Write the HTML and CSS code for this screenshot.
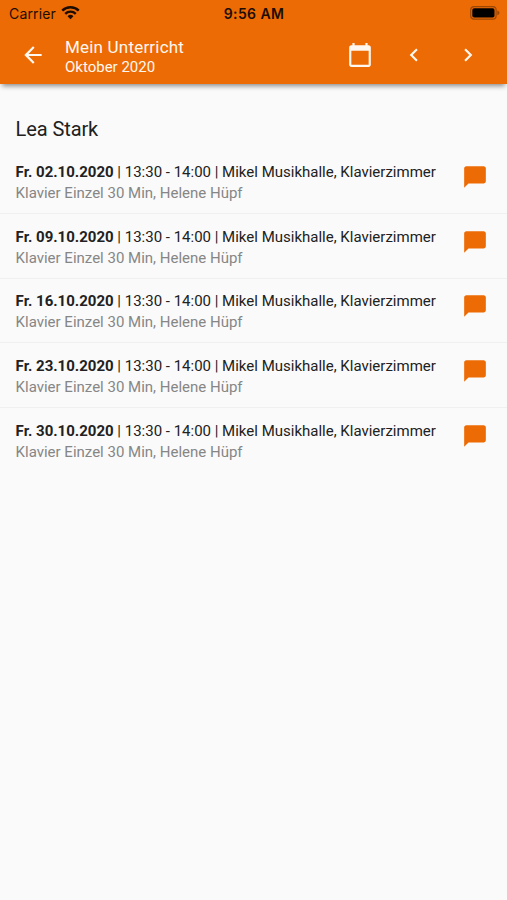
FILE: index.html
```html
<!DOCTYPE html>
<html lang="de">
  <head>
    <meta charset="UTF-8" />
    <meta name="viewport" content="width=device-width, initial-scale=1.0" />
    <title>Mein Unterricht</title>
    <link rel="stylesheet" href="styles.css">
  </head>
  <body>
    <header class="header">
      <div class="statusbar">
        <div class="carrier">
          <span>Carrier</span>
          <svg class="wifi" viewBox="0 0 18 14">
            <path d="M1.2 5.2a11.2 11.2 0 0 1 15.6 0" />
            <path d="M4 8.2a7.2 7.2 0 0 1 10 0" />
            <path class="dot" d="M9 13.4 6.2 10.6a4 4 0 0 1 5.6 0z" />
          </svg>
        </div>
        <div class="time">9:56 AM</div>
        <svg class="battery" viewBox="0 0 30 14">
          <rect class="case" x="0.7" y="0.7" width="25.4" height="12.4" rx="3.4" />
          <rect x="2.3" y="2.3" width="22.2" height="9.2" rx="1.8" />
          <path class="cap" d="M27.3 4.6c1.4.5 2.1 1.3 2.1 2.3s-.7 1.8-2.1 2.3z" />
        </svg>
      </div>

      <div class="toolbar">
        <svg class="icon back" viewBox="0 0 24 24">
          <path d="M20 11H7.83l5.59-5.59L12 4l-8 8 8 8 1.41-1.41L7.83 13H20v-2z" />
        </svg>
        <div class="titles">
          <div class="title">Mein Unterricht</div>
          <div class="month">Oktober 2020</div>
        </div>
        <div class="actions">
          <svg class="icon" viewBox="0 0 24 24">
            <path d="M20 3h-1V1h-2v2H7V1H5v2H4c-1.1 0-2 .9-2 2v16c0 1.1.9 2 2 2h16c1.1 0 2-.9 2-2V5c0-1.1-.9-2-2-2zm0 18H4V8h16v13z" />
          </svg>
          <svg class="icon" viewBox="0 0 24 24">
            <path d="M15.41 7.41 14 6l-6 6 6 6 1.41-1.41L10.83 12z" />
          </svg>
          <svg class="icon" viewBox="0 0 24 24">
            <path d="M10 6 8.59 7.41 13.17 12l-4.58 4.59L10 18l6-6z" />
          </svg>
        </div>
      </div>
    </header>

    <main>
      <h1 class="student">Lea Stark</h1>

      <ul class="lessons">
        <li class="lesson">
          <div class="info">
            <div class="when"><b>Fr. 02.10.2020</b> | 13:30 - 14:00 | Mikel Musikhalle, Klavierzimmer</div>
            <div class="course">Klavier Einzel 30 Min, Helene Hüpf</div>
          </div>
          <svg class="icon bubble" viewBox="0 0 24 24">
            <path d="M20 2H4c-1.1 0-2 .9-2 2v18l4-4h14c1.1 0 2-.9 2-2V4c0-1.1-.9-2-2-2z" />
          </svg>
        </li>
        <li class="lesson">
          <div class="info">
            <div class="when"><b>Fr. 09.10.2020</b> | 13:30 - 14:00 | Mikel Musikhalle, Klavierzimmer</div>
            <div class="course">Klavier Einzel 30 Min, Helene Hüpf</div>
          </div>
          <svg class="icon bubble" viewBox="0 0 24 24">
            <path d="M20 2H4c-1.1 0-2 .9-2 2v18l4-4h14c1.1 0 2-.9 2-2V4c0-1.1-.9-2-2-2z" />
          </svg>
        </li>
        <li class="lesson">
          <div class="info">
            <div class="when"><b>Fr. 16.10.2020</b> | 13:30 - 14:00 | Mikel Musikhalle, Klavierzimmer</div>
            <div class="course">Klavier Einzel 30 Min, Helene Hüpf</div>
          </div>
          <svg class="icon bubble" viewBox="0 0 24 24">
            <path d="M20 2H4c-1.1 0-2 .9-2 2v18l4-4h14c1.1 0 2-.9 2-2V4c0-1.1-.9-2-2-2z" />
          </svg>
        </li>
        <li class="lesson">
          <div class="info">
            <div class="when"><b>Fr. 23.10.2020</b> | 13:30 - 14:00 | Mikel Musikhalle, Klavierzimmer</div>
            <div class="course">Klavier Einzel 30 Min, Helene Hüpf</div>
          </div>
          <svg class="icon bubble" viewBox="0 0 24 24">
            <path d="M20 2H4c-1.1 0-2 .9-2 2v18l4-4h14c1.1 0 2-.9 2-2V4c0-1.1-.9-2-2-2z" />
          </svg>
        </li>
        <li class="lesson">
          <div class="info">
            <div class="when"><b>Fr. 30.10.2020</b> | 13:30 - 14:00 | Mikel Musikhalle, Klavierzimmer</div>
            <div class="course">Klavier Einzel 30 Min, Helene Hüpf</div>
          </div>
          <svg class="icon bubble" viewBox="0 0 24 24">
            <path d="M20 2H4c-1.1 0-2 .9-2 2v18l4-4h14c1.1 0 2-.9 2-2V4c0-1.1-.9-2-2-2z" />
          </svg>
        </li>
      </ul>
    </main>
  </body>
</html>
```
FILE: styles.css
```css
* {
  box-sizing: border-box;
}

body {
  margin: 0;
  min-height: 100vh;
  background: #fafafa;
  color: #212121;
  font-family: Roboto, sans-serif;
}

.header {
  height: 84px;
  background: #ed6b04;
  box-shadow: 0 4px 5px -2px rgba(0, 0, 0, 0.45);
}

.statusbar {
  display: grid;
  grid-template-columns: 1fr auto 1fr;
  align-items: center;
  height: 27px;
  padding: 0 7px 0 9px;
  color: #1c0d00;
  font-family: Inter, sans-serif;
  font-size: 14px;
}

.carrier {
  display: flex;
  align-items: center;
  gap: 5px;
  letter-spacing: 0.15px;
}

.wifi {
  width: 19px;
  height: 15px;
  margin-top: -2px;
  fill: none;
  stroke: #1c0d00;
  stroke-width: 2.3;
}

.wifi .dot {
  fill: #1c0d00;
  stroke: none;
}

.time {
  margin-right: 1px;
  font-weight: 600;
  letter-spacing: 0.4px;
}

.battery {
  justify-self: end;
  width: 30px;
  height: 14px;
  margin-top: -1px;
}

.battery .case {
  fill: none;
  stroke: #9c4703;
  stroke-width: 1.2;
}

.battery .cap {
  fill: #9c4703;
}

.toolbar {
  display: flex;
  align-items: center;
  height: 56px;
  padding: 0 26px 0 20px;
  color: #fff8f0;
}

.icon {
  flex: none;
  width: 26px;
  height: 26px;
  fill: currentColor;
}

.titles {
  flex: 1;
  margin-left: 19px;
  padding-top: 4px;
}

.title {
  font-size: 17px;
  line-height: 20px;
  letter-spacing: 0.2px;
}

.month {
  padding-top: 1px;
  font-size: 15px;
  line-height: 19px;
}

.actions {
  display: flex;
  gap: 28px;
}

.student {
  margin: 0;
  padding: 32px 15.6px 0;
  font-size: 20px;
  font-weight: 400;
  line-height: 26px;
  letter-spacing: -0.1px;
}

.lessons {
  margin: 7px 0 0;
  padding: 0;
  list-style: none;
}

.lesson {
  display: flex;
  align-items: center;
  height: 64.8px;
  padding: 4px 19px 0 15.6px;
  border-bottom: 1px solid #f0f0f0;
}

.lesson:last-child {
  border-bottom-color: transparent;
}

.info {
  flex: 1;
  white-space: nowrap;
}

.when,
.course {
  font-size: 15px;
  line-height: 21px;
}

.course {
  color: #868686;
}

.bubble {
  margin-bottom: 12px;
  color: #ed6b04;
}
```
